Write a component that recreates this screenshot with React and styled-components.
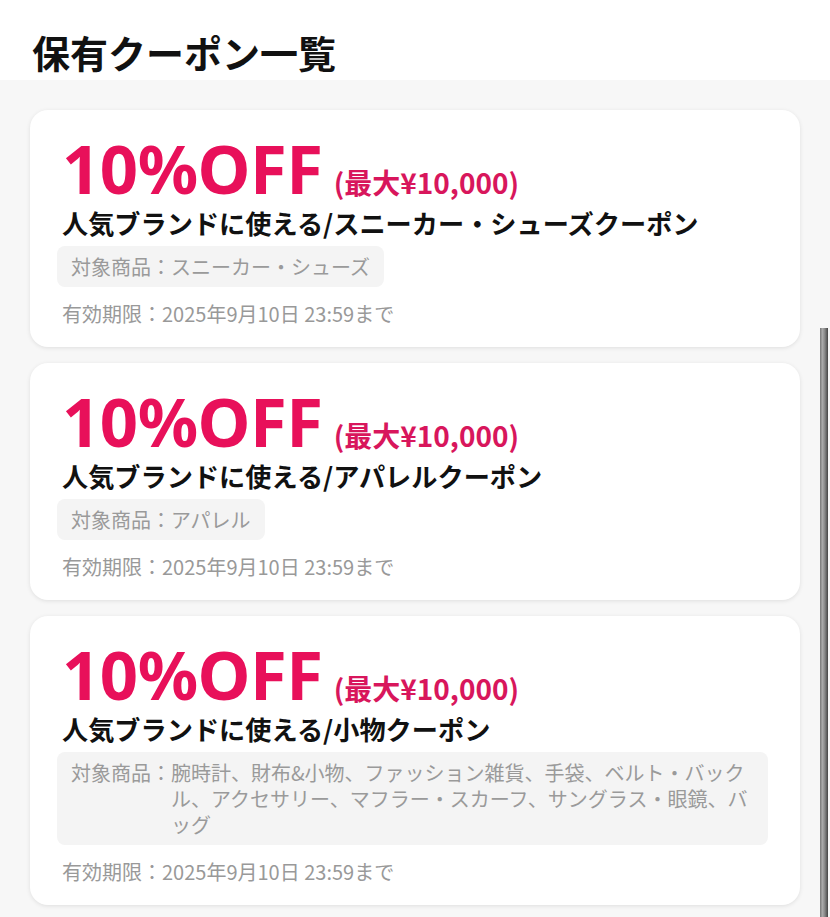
import React from "react";
import styled, { createGlobalStyle } from "styled-components";

const GlobalStyle = createGlobalStyle`
  html, body {
    margin: 0;
    padding: 0;
    background: #f7f7f7;
    font-family: "Noto Sans", "Noto Sans CJK JP", sans-serif;
  }
  * { box-sizing: border-box; }
`;

const coupons = [
  {
    name: "人気ブランドに使える/スニーカー・シューズクーポン",
    target: "スニーカー・シューズ",
  },
  {
    name: "人気ブランドに使える/アパレルクーポン",
    target: "アパレル",
  },
  {
    name: "人気ブランドに使える/小物クーポン",
    target:
      "腕時計、財布&小物、ファッション雑貨、手袋、ベルト・バックル、アクセサリー、マフラー・スカーフ、サングラス・眼鏡、バッグ",
  },
];

const App = () => {
  return (
    <Page>
      <GlobalStyle />
      <Header>
        <Title>保有クーポン一覧</Title>
      </Header>
      <List>
        {coupons.map((c) => (
          <Card key={c.name}>
            <Discount>
              <span className="big">10%OFF</span>
              <span className="max">(最大¥10,000)</span>
            </Discount>
            <Name>{c.name}</Name>
            <Target>
              <span className="label">対象商品：</span>
              <span className="value">{c.target}</span>
            </Target>
            <Expiry>有効期限：2025年9月10日 23:59まで</Expiry>
          </Card>
        ))}
      </List>
      <ScrollThumb />
    </Page>
  );
};

const Page = styled.div`
  min-height: 917px;
  background: #f7f7f7;
`;

const Header = styled.header`
  background: #fff;
  height: 80px;
  padding: 27px 0 0 32px;
`;

const Title = styled.h1`
  margin: 0;
  font-family: "Noto Sans CJK JP", sans-serif;
  font-size: 38px;
  font-weight: 700;
  line-height: 50px;
  color: #111;
`;

const List = styled.div`
  display: flex;
  flex-direction: column;
  gap: 16px;
  padding: 30px 30px 20px 30px;
`;

const Card = styled.div`
  background: #fff;
  border-radius: 18px;
  box-shadow: 0 1px 4px rgba(0, 0, 0, 0.1);
  padding: 21px 32px 19px 32px;
  display: flex;
  flex-direction: column;
  align-items: flex-start;
`;

const Discount = styled.div`
  display: flex;
  align-items: baseline;
  gap: 11px;
  height: 75px;
  line-height: 75px;
  .big {
    font-family: "Noto Sans", sans-serif;
    font-size: 67px;
    font-weight: 700;
    color: #e8105a;
    letter-spacing: -0.5px;
  }
  .max {
    font-family: "Noto Sans CJK JP", sans-serif;
    font-size: 28px;
    font-weight: 700;
    color: #d8165c;
  }
`;

const Name = styled.div`
  font-family: "Noto Sans CJK JP", sans-serif;
  font-size: 26.2px;
  font-weight: 700;
  line-height: 34px;
  color: #111;
`;

const Target = styled.div`
  display: flex;
  margin: 6px 0 0 -5px;
  padding: 7.5px 14px;
  background: #f4f4f4;
  border-radius: 8px;
  font-family: "Noto Sans CJK JP", sans-serif;
  font-size: 20px;
  line-height: 26px;
  color: #9a9a9a;
  max-width: calc(100% + 5px);
  .label {
    flex-shrink: 0;
  }
`;

const Expiry = styled.div`
  margin-top: 13px;
  font-family: "Noto Sans CJK JP", sans-serif;
  font-size: 20px;
  line-height: 28px;
  color: #999;
`;

const ScrollThumb = styled.div`
  position: fixed;
  right: 2px;
  top: 328px;
  bottom: 0;
  width: 8px;
  background: linear-gradient(to right, #777 0%, #aaa 30%, #888 60%, #444 100%);
`;

export default App;
